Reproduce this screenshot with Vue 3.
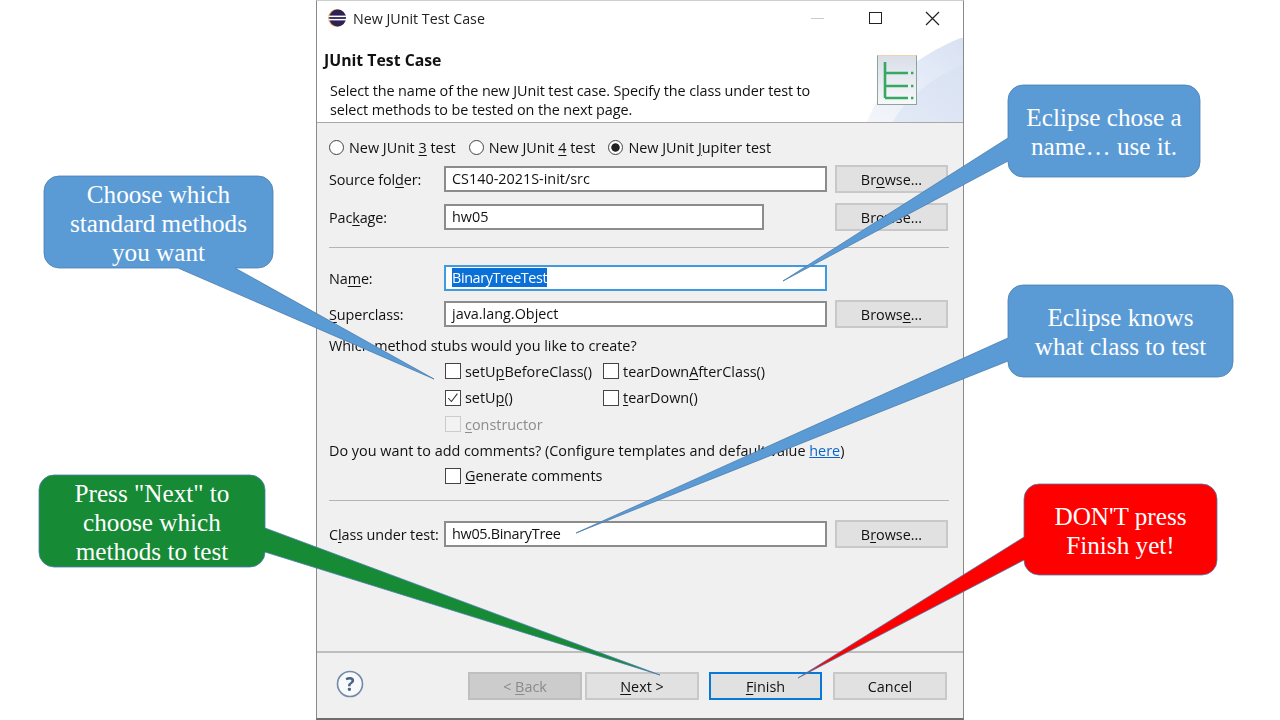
<script setup>
const r = 15
const corner = (x, y) => `A${r} ${r} 0 0 1 ${x} ${y}`
function bubble(c) {
  const { x, y, w, h, side, a, b, tip } = c
  const R = x + w, B = y + h
  const parts = [`M${x + r} ${y}`, `H${R - r}`, corner(R, y + r)]
  if (side === 'right') parts.push(`V${a}`, `L${tip[0]} ${tip[1]}`, `L${R} ${b}`)
  parts.push(`V${B - r}`, corner(R - r, B))
  if (side === 'bottom') parts.push(`H${b}`, `L${tip[0]} ${tip[1]}`, `L${a} ${B}`)
  parts.push(`H${x + r}`, corner(x, B - r))
  if (side === 'left') parts.push(`V${b}`, `L${tip[0]} ${tip[1]}`, `L${x} ${a}`)
  parts.push(`V${y + r}`, corner(x + r, y), 'Z')
  return parts.join(' ')
}
const callouts = [
  { x: 44, y: 176, w: 229, h: 92, side: 'bottom', a: 178, b: 235, tip: [434, 379], fill: '#5b9bd5', lines: ['Choose which', 'standard methods', 'you want'] },
  { x: 1008, y: 85, w: 192, h: 92, side: 'left', a: 138, b: 161, tip: [783, 281], fill: '#5b9bd5', lines: ['Eclipse chose a', 'name… use it.'] },
  { x: 1008, y: 285, w: 225, h: 92, side: 'left', a: 338, b: 361, tip: [576, 533], fill: '#5b9bd5', lines: ['Eclipse knows', 'what class to test'] },
  { x: 39, y: 475, w: 226, h: 92, side: 'right', a: 528, b: 552, tip: [660, 675], fill: '#168a34', lines: ['Press "Next" to', 'choose which', 'methods to test'] },
  { x: 1024, y: 484, w: 193, h: 91, side: 'left', a: 537, b: 560, tip: [798, 678], fill: '#ff0000', lines: ["DON'T press", 'Finish yet!'] }
].map(c => ({ ...c, d: bubble(c) }))
const boxStyle = c => ({ left: c.x + 'px', top: c.y + 'px', width: c.w + 'px', height: c.h + 'px' })
</script>

<template>
  <div class="page">
    <div class="dialog">
      <div class="titlebar">
        <svg class="eclipse" viewBox="0 0 18 18" width="18" height="18">
          <circle cx="9" cy="9" r="9" fill="#f0a858" />
          <circle cx="9.6" cy="9" r="8.4" fill="#2c2255" />
          <rect x="0.5" y="6.6" width="17.5" height="1.5" fill="#fff" />
          <rect x="0.5" y="9.9" width="17.5" height="1.5" fill="#fff" />
        </svg>
        <span class="title">New JUnit Test Case</span>
        <span class="win-min"></span>
        <span class="win-max"></span>
        <svg class="win-close" viewBox="0 0 15 15" width="15" height="15">
          <path d="M1 1L14 14M14 1L1 14" stroke="#222" stroke-width="1.2" fill="none" />
        </svg>
      </div>

      <div class="header">
        <svg class="swoosh" viewBox="0 0 96 85" width="96" height="85" preserveAspectRatio="none">
          <defs>
            <linearGradient id="sw" x1="0" y1="1" x2="1" y2="0">
              <stop offset="0" stop-color="#f4f6fb" />
              <stop offset="0.5" stop-color="#e6ecf8" />
              <stop offset="1" stop-color="#d8e1f4" />
            </linearGradient>
          </defs>
          <path d="M0 85C12 50 50 18 96 0V85Z" fill="url(#sw)" />
          <path d="M26 85C38 62 66 40 96 28V85Z" fill="#d5dff2" opacity="0.5" />
        </svg>
        <div class="h-title">JUnit Test Case</div>
        <div class="h-desc">Select the name of the new JUnit test case. Specify the class under test to<br>select methods to be tested on the next page.</div>
        <svg class="h-icon" viewBox="0 0 40 50" width="40" height="50">
          <defs>
            <linearGradient id="ic" x1="0" y1="0" x2="0" y2="1">
              <stop offset="0" stop-color="#d9dee8" />
              <stop offset="1" stop-color="#f7f8fa" />
            </linearGradient>
          </defs>
          <rect x="0.5" y="0.5" width="39" height="49" fill="url(#ic)" stroke="#8fa39c" />
          <path d="M0.5 0.5H39.5" stroke="#ecd3b4" />
          <path d="M8 7V43M8 18H31M8 31H31M8 43H31" stroke="#35a862" stroke-width="2.6" fill="none" />
          <path d="M34 18h2.4M34 31h2.4M34 43h2.4" stroke="#35a862" stroke-width="2.4" fill="none" />
        </svg>
      </div>

      <div class="body">
        <div class="radios">
          <label class="radio"><i class="dot"></i>New JUnit <u>3</u> test</label>
          <label class="radio r2"><i class="dot"></i>New JUnit <u>4</u> test</label>
          <label class="radio r3"><i class="dot on"></i>New JUnit <u>J</u>upiter test</label>
        </div>

        <div class="row first">
          <span class="lbl">Source fol<u>d</u>er:</span>
          <span class="input">CS140-2021S-init/src</span>
          <span class="btn">Br<u>o</u>wse...</span>
        </div>
        <div class="row">
          <span class="lbl">Pac<u>k</u>age:</span>
          <span class="input short">hw05</span>
          <span class="btn">Br<u>o</u>wse...</span>
        </div>
        <div class="sep s1"></div>
        <div class="row name">
          <span class="lbl">Na<u>m</u>e:</span>
          <span class="input focus"><mark>BinaryTreeTest</mark></span>
        </div>
        <div class="row sup">
          <span class="lbl"><u>S</u>uperclass:</span>
          <span class="input">java.lang.Object</span>
          <span class="btn">Brows<u>e</u>...</span>
        </div>

        <div class="text which">Which method stubs would you like to create?</div>
        <div class="checks">
          <label class="check"><i class="box"></i>setU<u>p</u>BeforeClass()</label>
          <label class="check"><i class="box"></i>tearDown<u>A</u>fterClass()</label>
          <label class="check">
            <i class="box"><svg viewBox="0 0 16 16" width="14" height="14"><path d="M2.5 8L6.2 12L13 3" stroke="#333" stroke-width="1.2" fill="none" /></svg></i>setU<u>p</u>()
          </label>
          <label class="check"><i class="box"></i><u>t</u>earDown()</label>
          <label class="check off"><i class="box"></i><u>c</u>onstructor</label>
        </div>
        <div class="text want">Do you want to add comments? (Configure templates and default value <a>here</a>)</div>
        <div class="checks gen">
          <label class="check"><i class="box"></i><u>G</u>enerate comments</label>
        </div>
        <div class="sep s2"></div>
        <div class="row cut">
          <span class="lbl">C<u>l</u>ass under test:</span>
          <span class="input tight">hw05.BinaryTree</span>
          <span class="btn">B<u>r</u>owse...</span>
        </div>
      </div>

      <div class="footer">
        <svg class="help" viewBox="0 0 28 28" width="28" height="28">
          <circle cx="14" cy="14" r="12.5" fill="#f8f9fb" stroke="#7389a8" stroke-width="1.6" />
          <text x="14" y="20.5" text-anchor="middle" class="q">?</text>
        </svg>
        <span class="btn disabled">&lt; <u>B</u>ack</span>
        <span class="btn"><u>N</u>ext &gt;</span>
        <span class="btn default"><u>F</u>inish</span>
        <span class="btn">Cancel</span>
      </div>
    </div>

    <svg class="overlay" viewBox="0 0 1280 720" width="1280" height="720">
      <path v-for="c in callouts" :key="c.x" :d="c.d" :fill="c.fill" stroke="#4a7eae" stroke-width="0.8" />
    </svg>
    <div v-for="c in callouts" :key="c.x + 't'" class="say" :style="boxStyle(c)">
      <span v-for="l in c.lines" :key="l">{{ l }}</span>
    </div>
  </div>
</template>

<style>
html, body { margin: 0; background: #fff; }
</style>

<style scoped>
.page {
  position: relative;
  width: 1280px;
  height: 720px;
  overflow: hidden;
  background: #fff;
  font-family: "Open Sans", "Noto Sans", sans-serif;
  color: #111;
}
.dialog {
  box-sizing: border-box;
  width: 648px;
  height: 720px;
  margin-left: 316px;
  display: flex;
  flex-direction: column;
  background: #f0f0f0;
  border: 1px solid #8a8a8a;
  border-top-color: #cfcfcf;
  border-bottom: 2px solid #6d6d6d;
  font-size: 14.4px;
  filter: blur(0.3px);
}
u { text-underline-offset: 2px; }
.titlebar {
  box-sizing: border-box;
  display: flex;
  align-items: center;
  height: 37px;
  flex: none;
  padding: 0 0 3px 11px;
  background: #fff;
}
.eclipse { flex: none; }
.title { margin-left: 7px; font-size: 14.25px; color: #222; white-space: nowrap; }
.win-min { width: 13px; height: 1px; margin-left: 326px; background: #ccc; }
.win-max { box-sizing: border-box; width: 13px; height: 12px; margin-left: 45px; border: 1.4px solid #222; }
.win-close { margin-left: 43px; }
.header {
  position: relative;
  flex: none;
  height: 84px;
  background: #fff;
  border-bottom: 1px solid #a8a8a8;
  overflow: hidden;
}
.swoosh { position: absolute; right: 0; bottom: 0; }
.h-icon { position: absolute; left: 560px; top: 17px; }
.h-title {
  position: relative;
  margin: 12px 0 0 7px;
  font-size: 15.8px;
  font-weight: 700;
  line-height: 20px;
  white-space: nowrap;
}
.h-desc {
  position: relative;
  margin: 11px 0 0 13px;
  line-height: 19px;
  letter-spacing: -0.1px;
  white-space: nowrap;
}
.body { flex: 1; padding: 0 14px 0 12px; }
.radios { display: flex; height: 24px; margin-top: 12px; align-items: center; }
.radio { display: flex; align-items: center; white-space: pre-wrap; }
.r2 { margin-left: 13px; }
.r3 { margin-left: 13px; }
.dot {
  box-sizing: border-box;
  width: 15px;
  height: 15px;
  margin-right: 5px;
  border: 1px solid #444;
  border-radius: 50%;
  background: #fff;
  flex: none;
}
.dot.on { background: radial-gradient(circle, #222 0 3.8px, #fff 4.6px); }
.row {
  display: flex;
  align-items: center;
  height: 28px;
  margin-top: 10px;
}
.row.first { margin-top: 6px; }
.row.name { margin-top: 16px; }
.row.sup { margin-top: 8px; }
.row.cut { margin-top: 19px; }
.lbl { width: 115px; flex: none; white-space: nowrap; letter-spacing: -0.1px; }
.input {
  box-sizing: border-box;
  display: block;
  width: 383px;
  height: 26px;
  padding: 0 6px;
  line-height: 22px;
  background: #fff;
  border: 2px solid #8c8c8c;
  white-space: nowrap;
}
.input.short { width: 320px; margin-right: 63px; }
.input.tight { letter-spacing: -0.3px; }
.input.focus { border-color: #3f9be0; }
mark { background: #0a6fd6; color: #fff; letter-spacing: -0.4px; }
.btn {
  box-sizing: border-box;
  display: flex;
  align-items: center;
  justify-content: center;
  width: 113px;
  height: 28px;
  margin-left: 8px;
  background: #e1e1e1;
  border: 2px solid #c8c8c8;
  white-space: pre;
  flex: none;
}
.sep { height: 1px; background: #b4b4b4; }
.s1 { margin-top: 16px; }
.s2 { margin-top: 11px; }
.text { line-height: 20px; white-space: nowrap; }
.which { margin-top: 8px; }
.checks {
  display: grid;
  grid-template-columns: 158px auto;
  grid-auto-rows: 26.5px;
  margin: 2px 0 0 116px;
  white-space: nowrap;
}
.check { display: flex; align-items: center; }
.check.off { color: #8c8c8c; }
.box {
  box-sizing: border-box;
  display: flex;
  align-items: center;
  justify-content: center;
  width: 16px;
  height: 16px;
  margin-right: 4px;
  background: #fff;
  border: 1px solid #444;
  flex: none;
}
.off .box { border-color: #ccc; background: #f2f2f2; }
.want { margin-top: 3px; }
.want a { color: #0a66c8; text-decoration: underline; }
.gen { margin-top: 2px; }
.footer {
  position: relative;
  flex: none;
  box-sizing: border-box;
  display: flex;
  height: 67px;
  padding: 19px 0 0 151px;
  border-top: 2px solid #bdbdbd;
}
.help { position: absolute; left: 19px; top: 17px; }
.q { font: 700 19px "Open Sans", sans-serif; fill: #4a6388; }
.footer .btn { width: 114px; margin-left: 0; margin-right: 3px; }
.footer .btn.disabled { background: #cccccc; color: #8a8a8a; border-color: #bfbfbf; }
.footer .btn.default { width: 113px; margin-left: 7px; margin-right: 11px; border: 2px solid #0a78d7; }
.overlay { position: absolute; left: 0; top: 0; pointer-events: none; }
.say {
  position: absolute;
  box-sizing: border-box;
  display: flex;
  flex-direction: column;
  align-items: center;
  justify-content: center;
  padding-top: 2px;
  font-family: "Liberation Serif", serif;
  font-size: 25.2px;
  line-height: 29px;
  color: #fff;
  white-space: nowrap;
}
</style>
